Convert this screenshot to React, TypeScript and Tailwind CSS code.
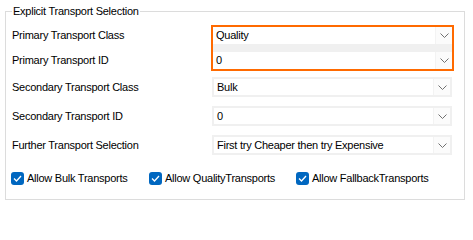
import type { ReactNode } from 'react';

function Chevron() {
  return (
    <svg width="9" height="5" viewBox="0 0 9 5" className="text-[#707070]">
      <path d="M0.5 0.5 L4.5 4.5 L8.5 0.5" fill="none" stroke="currentColor" strokeWidth={1} />
    </svg>
  );
}

function DropButton() {
  return (
    <div className="h-full w-[17px] flex items-center justify-center bg-[#fbfbfb] border-l border-[#f3f3f3]">
      <Chevron />
    </div>
  );
}

// combo inside the orange highlight: plain white field
function FlatCombo({ value }: { value: string }) {
  return (
    <div className="h-[17px] bg-white flex items-center">
      <span className="flex-1 pl-[3px]">{value}</span>
      <DropButton />
    </div>
  );
}

function Combo({ value }: { value: string }) {
  return (
    <div className="h-[20px] w-[240px] border-2 border-[#f0f0f0] bg-white flex items-center">
      <span className="flex-1 pl-[3px]">{value}</span>
      <DropButton />
    </div>
  );
}

function Label({ children, h }: { children: ReactNode; h: string }) {
  return <div className={`${h} flex items-center`}>{children}</div>;
}

function Check({ label }: { label: string }) {
  return (
    <label className="flex items-center gap-[3px]">
      <span className="w-[13px] h-[13px] rounded-[3px] bg-[#0067c0] flex items-center justify-center">
        <svg width="9" height="7" viewBox="0 0 9 7">
          <path d="M1 3.5 L3.5 6 L8 1" fill="none" stroke="white" strokeWidth={1.3} />
        </svg>
      </span>
      <span>{label}</span>
    </label>
  );
}

export default function App() {
  return (
    <div className="w-[473px] h-[206px] bg-white pt-[11px] pl-[5px] text-[11px] tracking-[-0.25px] text-black font-['Liberation_Sans',Arial,sans-serif]">
      <div className="relative w-[460px] h-[189px] border border-[#dcdcdc] pl-[6px]">
        {/* group caption over the top border */}
        <span className="absolute -top-[8px] left-[6px] bg-white px-[1px] leading-[14px]">
          Explicit Transport Selection
        </span>

        <div className="flex mt-[13px]">
          <div className="w-[199px] flex flex-col">
            <div className="h-[46px] flex flex-col gap-[8px] py-[2px]">
              <Label h="h-[17px]">Primary Transport Class</Label>
              <Label h="h-[17px]">Primary Transport ID</Label>
            </div>
            <div className="flex flex-col gap-[9px] mt-[6px]">
              <Label h="h-[20px]">Secondary Transport Class</Label>
              <Label h="h-[20px]">Secondary Transport ID</Label>
              <Label h="h-[20px]">Further Transport Selection</Label>
            </div>
          </div>

          <div className="flex flex-col">
            <div className="w-[243px] h-[46px] border-2 border-[#ff6a00] bg-[#f0f0f0] flex flex-col gap-[8px]">
              <FlatCombo value="Quality" />
              <FlatCombo value="0" />
            </div>
            <div className="flex flex-col gap-[9px] mt-[6px] ml-[1px]">
              <Combo value="Bulk" />
              <Combo value="0" />
              <Combo value="First try Cheaper then try Expensive" />
            </div>
          </div>
        </div>

        <div className="flex items-center mt-[15px] -ml-[1px]">
          <div className="w-[138px]"><Check label="Allow Bulk Transports" /></div>
          <div className="w-[147px]"><Check label="Allow QualityTransports" /></div>
          <Check label="Allow FallbackTransports" />
        </div>
      </div>
    </div>
  );
}
